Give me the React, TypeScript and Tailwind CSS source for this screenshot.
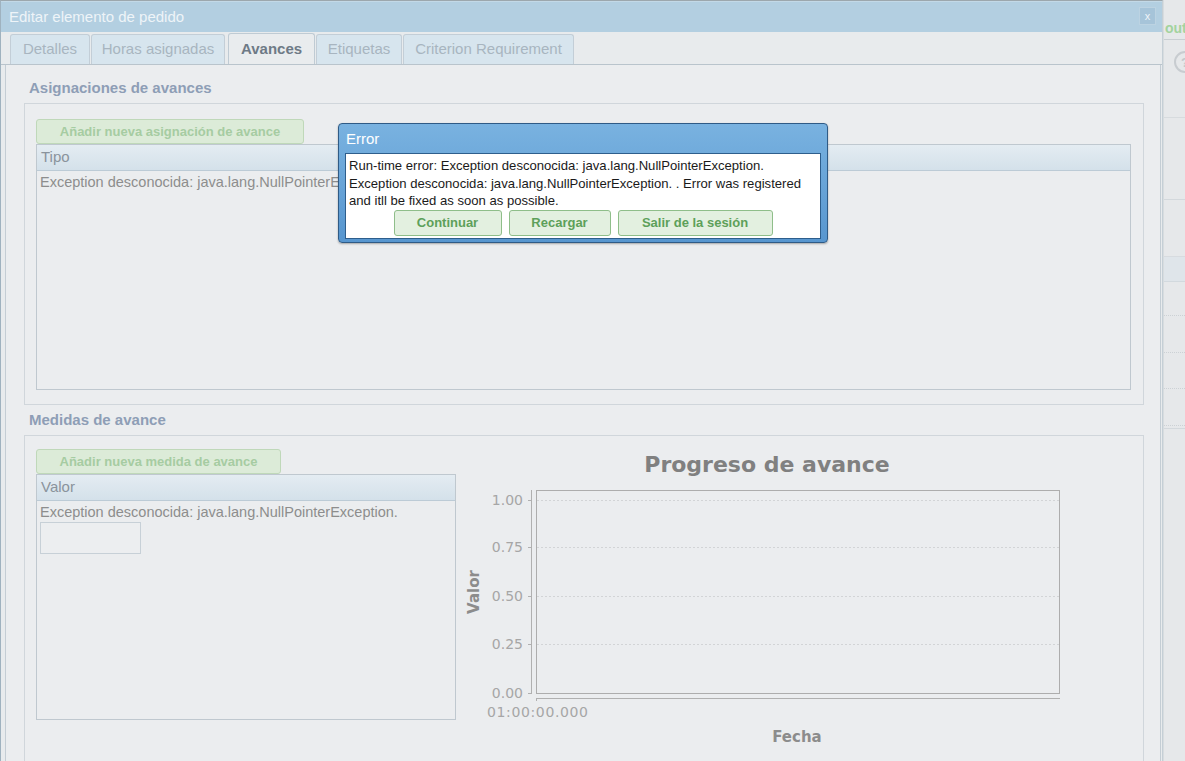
import React from "react";

function Tab({ label, w, active }: { label: string; w: number; active?: boolean }) {
  return (
    <div
      style={{ width: w }}
      className={
        active
          ? "h-[31px] shrink-0 flex items-center justify-center rounded-t-[3px] border border-b-0 border-[#bfcbd4] bg-[#e9ecee] text-[15px] font-bold text-[#6e7a86]"
          : "h-[30px] shrink-0 flex items-center justify-center rounded-t-[3px] border border-b-0 border-[#c3ced7] bg-[#d7e5ee] text-[15px] text-[#a8b5c0]"
      }
    >
      {label}
    </div>
  );
}

function GreenButton({ label, w }: { label: string; w: number }) {
  return (
    <div
      style={{ width: w }}
      className="h-[25px] shrink-0 flex items-center justify-center rounded-[3px] border border-[#bfd8b9] bg-[#dcebd8] text-[13px] font-bold text-[#a6cca2]"
    >
      {label}
    </div>
  );
}

function Chart() {
  const ticks = [
    { y: 51, l: "1.00" },
    { y: 98, l: "0.75" },
    { y: 147, l: "0.50" },
    { y: 195, l: "0.25" },
    { y: 244, l: "0.00" },
  ];
  return (
    <svg width="680" height="312" className="shrink-0" style={{ fontFamily: "'DejaVu Sans', sans-serif" }}>
      <text x="311" y="23" textAnchor="middle" fontSize="22" fontWeight="bold" fill="#808080">
        Progreso de avance
      </text>
      <rect x="80.5" y="41.5" width="523" height="203" fill="none" stroke="#adadad" />
      {ticks.slice(0, 4).map((t) => (
        <line key={t.y} x1="81" x2="603" y1={t.y + 0.5} y2={t.y + 0.5} stroke="#d2d4d6" strokeDasharray="2 2" />
      ))}
      <line x1="75.5" x2="75.5" y1="41" y2="245" stroke="#b0b0b0" />
      {ticks.map((t) => (
        <g key={t.l}>
          <line x1="72" x2="75" y1={t.y + 0.5} y2={t.y + 0.5} stroke="#b0b0b0" />
          <text x="67" y={t.y + 5} textAnchor="end" fontSize="14" fill="#a6a6a6">
            {t.l}
          </text>
        </g>
      ))}
      <line x1="80" x2="604" y1="249.5" y2="249.5" stroke="#b0b0b0" />
      <line x1="80.5" x2="80.5" y1="249" y2="252" stroke="#b0b0b0" />
      <text x="31" y="268" fontSize="14" fill="#a6a6a6" textLength="101" lengthAdjust="spacing">
        01:00:00.000
      </text>
      <text x="23" y="143" textAnchor="middle" fontSize="15" fontWeight="bold" fill="#8c8c8c" transform="rotate(-90 23 143)">
        Valor
      </text>
      <text x="341" y="293" textAnchor="middle" fontSize="15" fontWeight="bold" fill="#8c8c8c">
        Fecha
      </text>
    </svg>
  );
}

export default function App() {
  return (
    <div className="relative flex w-[1185px] h-[761px] overflow-hidden bg-[#e6e8ea] font-['Liberation_Sans',Arial,sans-serif]">
      {/* Window */}
      <div className="w-[1163px] shrink-0 flex flex-col border-t border-t-[#9ca7ad] border-l border-l-[#9fb2bf] border-r border-r-[#c5cfd6] bg-[#e8ebed]">
        {/* Title bar */}
        <div className="h-[31px] shrink-0 flex items-center justify-between bg-[#b3cfe1] border-t border-t-[#c3d9e7] pl-[8px] pr-[6px]">
          <span className="text-[15px] text-[#eef4f8]">Editar elemento de pedido</span>
          <div className="w-[17px] h-[18px] flex items-center justify-center bg-[#a6c4d9] border border-[#bcd3e2] text-[11px] leading-none text-[#eef4f8] mb-[2px]">
            x
          </div>
        </div>
        {/* Tabs */}
        <div className="h-[33px] shrink-0 flex items-end gap-[1px] pl-[9px] border-b border-b-[#b9c4cc]">
          <Tab label="Detalles" w={80} />
          <Tab label="Horas asignadas" w={134} />
          <div className="w-[1px] shrink-0" />
          <Tab label="Avances" w={87} active />
          <Tab label="Etiquetas" w={86} />
          <Tab label="Criterion Requirement" w={171} />
        </div>
        {/* Content panel */}
        <div className="flex-1 ml-[4px] mr-[1px] border-l border-r border-[#c4cdd4] bg-[#ebedef] pl-[18px] pr-[16px] flex flex-col">
          <div className="mt-[11px] h-[24px] pl-[5px] flex items-center text-[15px] font-bold text-[#8e9eb6]">
            Asignaciones de avances
          </div>
          <div className="mt-[3px] h-[302px] shrink-0 border border-[#d0d6db] pt-[15px] pl-[11px] pr-[12px] flex flex-col">
            <GreenButton label="Añadir nueva asignación de avance" w={268} />
            <div className="h-[246px] border border-[#bfc8cf] flex flex-col">
              <div className="h-[26px] shrink-0 flex items-center pl-[4px] bg-gradient-to-b from-[#e4ecf2] to-[#d4e1ea] border-b border-[#bccbd6] text-[15px] text-[#8a939c]">
                Tipo
              </div>
              <div className="pl-[3px] pt-[2px] text-[14.5px] leading-[18px] text-[#8d8d8d]">
                Exception desconocida: java.lang.NullPointerException.
              </div>
            </div>
          </div>
          <div className="mt-[3px] h-[24px] pl-[5px] flex items-center text-[15px] font-bold text-[#8e9eb6]">
            Medidas de avance
          </div>
          <div className="mt-[3px] flex-1 border border-[#d0d6db] border-b-0 pt-[13px] pl-[11px] flex">
            <div className="w-[420px] shrink-0 flex flex-col">
              <GreenButton label="Añadir nueva medida de avance" w={245} />
              <div className="h-[246px] border border-[#bfc8cf] flex flex-col">
                <div className="h-[26px] shrink-0 flex items-center pl-[4px] bg-gradient-to-b from-[#e4ecf2] to-[#d4e1ea] border-b border-[#bccbd6] text-[15px] text-[#8a939c]">
                  Valor
                </div>
                <div className="pl-[3px] pt-[2px] text-[14.5px] leading-[18px] text-[#8d8d8d]">
                  Exception desconocida: java.lang.NullPointerException.
                </div>
                <div className="ml-[3px] mt-[1px] w-[101px] h-[32px] border border-[#c7d0d7] bg-[#eceef0]" />
              </div>
            </div>
            <Chart />
          </div>
        </div>
      </div>

      {/* Page behind on the right */}
      <div className="flex-1 min-w-0 overflow-hidden flex flex-col border-l border-l-[#d7dcdf]">
        <div className="h-[40px] shrink-0 flex items-end pb-[4px] border-b border-b-[#c9ced2]">
          <span className="ml-[1px] text-[14px] font-bold text-[#a3d39e] leading-none whitespace-nowrap">out</span>
        </div>
        <div className="h-[78px] shrink-0 relative border-b border-b-[#d7dbde]">
          <div className="absolute left-[10px] top-[11px] w-[22px] h-[22px] rounded-full border-[2px] border-[#c8ccd0] flex items-center justify-center text-[13px] font-bold leading-none text-[#c3c7cb]">
            ?
          </div>
        </div>
        <div className="h-[82px] shrink-0 border-b border-b-[#d3d8dc]" />
        <div className="h-[57px] shrink-0 border-b border-b-[#d7dbdf]" />
        <div className="h-[25px] shrink-0 bg-[#dfe5ea] border-b border-b-[#d2d9de]" />
        <div className="h-[34px] shrink-0 border-b border-dotted border-b-[#ccd1d5]" />
        <div className="h-[37px] shrink-0 border-b border-dotted border-b-[#ccd1d5]" />
        <div className="h-[36px] shrink-0 border-b border-dotted border-b-[#ccd1d5]" />
        <div className="h-[37px] shrink-0 border-b border-dotted border-b-[#ccd1d5]" />
        <div className="h-[3px] shrink-0 border-b border-b-[#d3d8dc]" />
      </div>

      {/* Error dialog */}
      <div className="absolute left-[338px] top-[123px] w-[490px] h-[120px] rounded-[4px] border border-[#2f5b86] bg-gradient-to-b from-[#79b2e0] to-[#5796cf] px-[6px] flex flex-col shadow-[0_1px_2px_rgba(0,0,0,0.3)]">
        <div className="h-[29px] shrink-0 flex items-center pl-[1px] pt-[1px] text-[15px] text-white">Error</div>
        <div className="h-[86px] bg-white border border-[#2e5e8c] px-[3px] pt-[3px] flex flex-col">
          <div className="text-[13.1px] leading-[17.5px] text-[#1a1a1a]">
            Run-time error: Exception desconocida: java.lang.NullPointerException.
            <br />
            Exception desconocida: java.lang.NullPointerException. . Error was registered
            <br />
            and itll be fixed as soon as possible.
          </div>
          <div className="mt-[0px] flex justify-center gap-[7px]">
            {[
              { l: "Continuar", w: 108 },
              { l: "Recargar", w: 102 },
              { l: "Salir de la sesión", w: 155 },
            ].map((b) => (
              <div
                key={b.l}
                style={{ width: b.w }}
                className="h-[26px] flex items-center justify-center rounded-[3px] border border-[#8fbe8a] bg-[#e3f0e0] text-[13px] font-bold text-[#5da05a]"
              >
                {b.l}
              </div>
            ))}
          </div>
        </div>
      </div>
    </div>
  );
}
